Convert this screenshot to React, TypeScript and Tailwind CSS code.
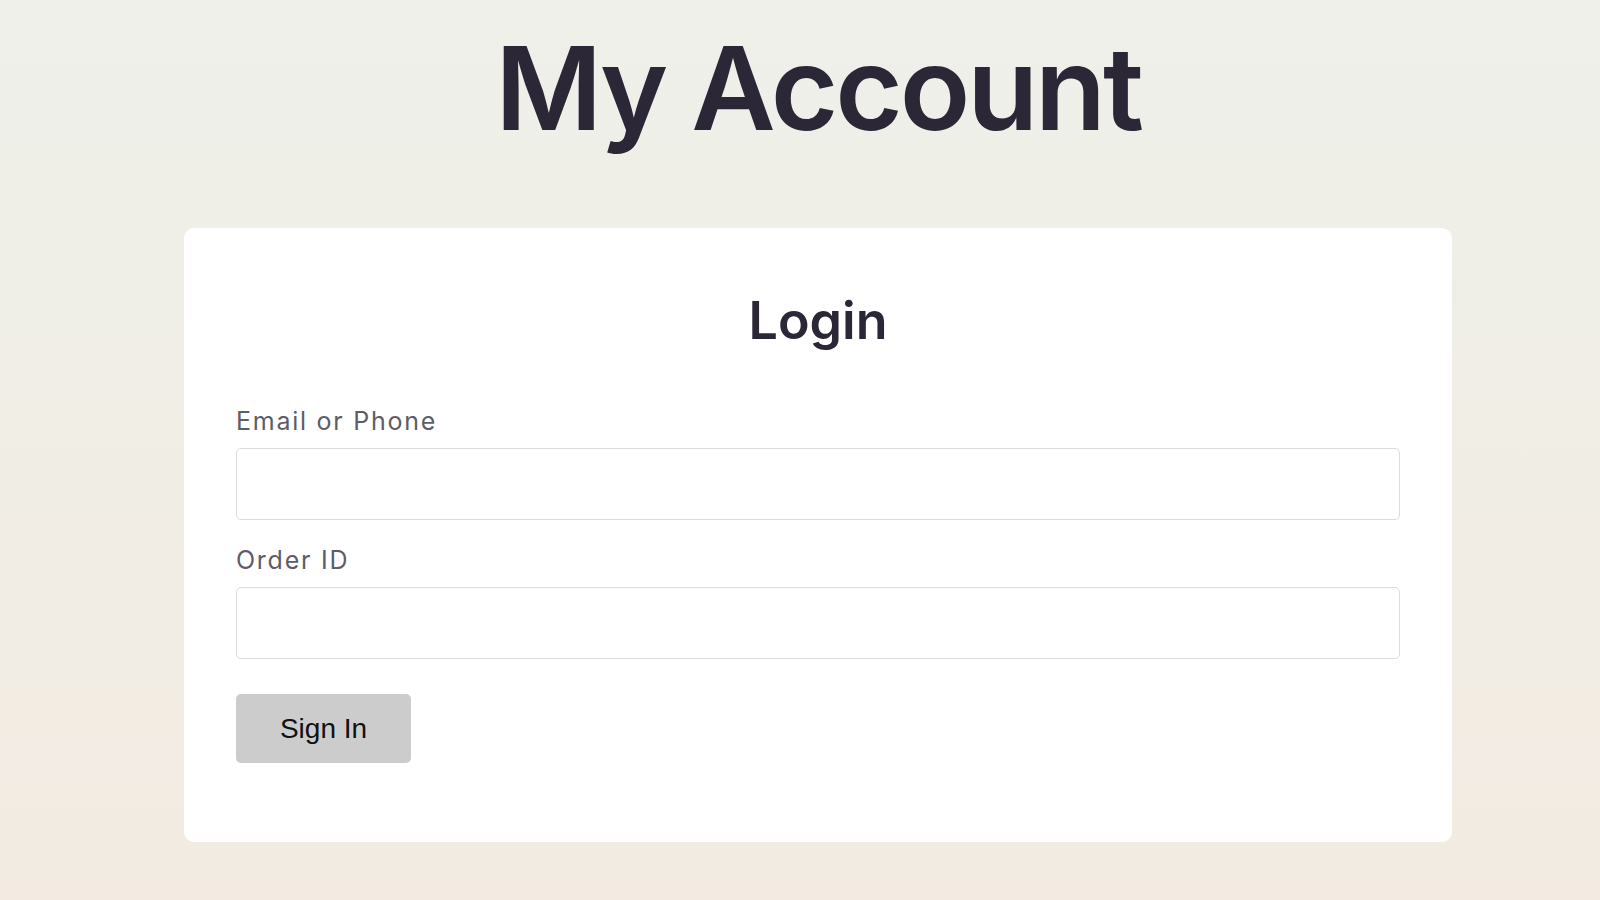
import React from "react";

// Login form fields
const fields = [
  { id: "email", label: "Email or Phone" },
  { id: "order", label: "Order ID" },
];

const App = () => {
  return (
    <div className="min-h-[900px] w-full bg-gradient-to-b from-[#eef0e9] to-[#f3ebe2] font-['Inter',sans-serif]">
      <div className="ml-[36px] px-[148px]">
        {/* Page title */}
        <h1 className="pt-[30px] text-center text-[116px] leading-none font-semibold tracking-[-0.027em] text-[#2c2736]">
          My Account
        </h1>

        {/* Login card */}
        <div className="mt-[82px] rounded-[10px] bg-white px-[52px] pt-[67px] pb-[79px]">
          <h2 className="text-center text-[52px] leading-none font-semibold text-[#2c2736]">
            Login
          </h2>

          <form className="mt-[62px] flex flex-col" onSubmit={(e) => e.preventDefault()}>
            {fields.map((field, i) => (
              <div key={field.id} className={i > 0 ? "mt-[28px]" : ""}>
                <label
                  htmlFor={field.id}
                  className="block text-[25px] leading-none tracking-[0.07em] text-[#5e5c67]"
                >
                  {field.label}
                </label>
                <input
                  id={field.id}
                  type="text"
                  className="mt-[14px] block h-[72px] w-full rounded-[5px] border border-[#dcdcdc] bg-white px-4 text-[22px] outline-none"
                />
              </div>
            ))}

            <div className="mt-[35px]">
              <button
                type="submit"
                className="h-[69px] w-[175px] rounded-[5px] bg-[#cccccc] font-['Liberation_Sans',Arial,sans-serif] text-[28px] text-[#111]"
              >
                Sign In
              </button>
            </div>
          </form>
        </div>
      </div>
    </div>
  );
};

export default App;
